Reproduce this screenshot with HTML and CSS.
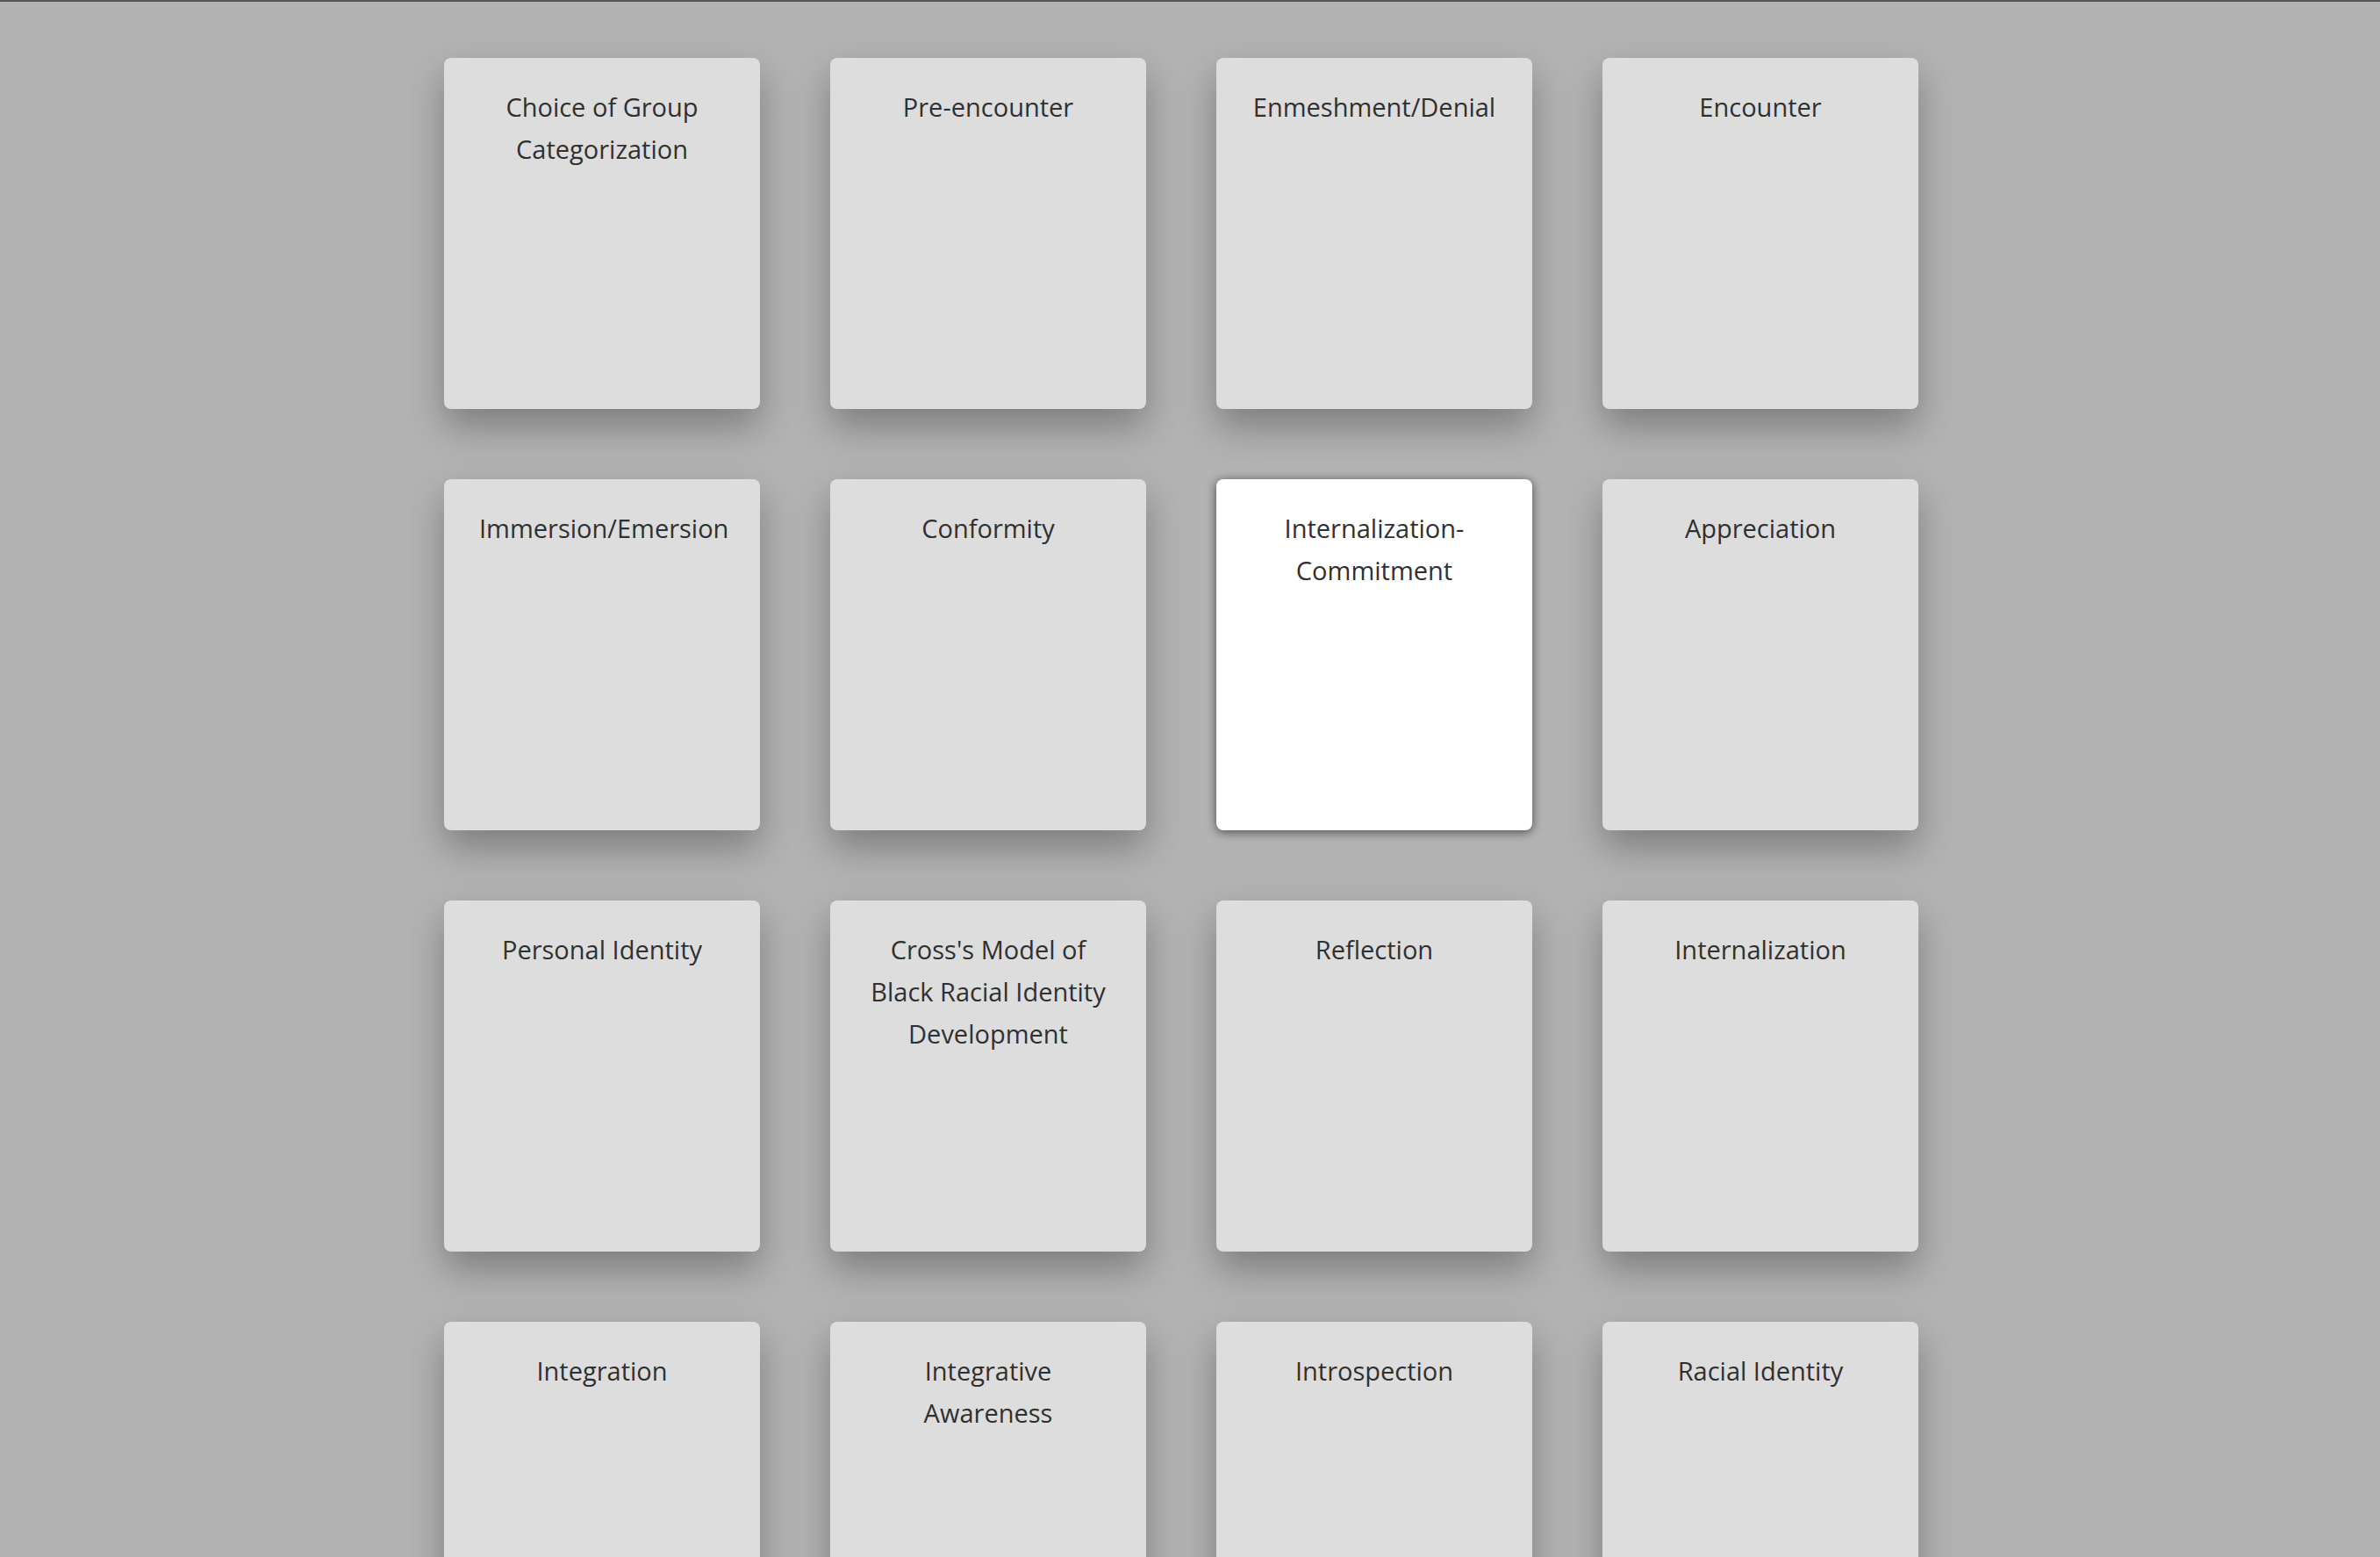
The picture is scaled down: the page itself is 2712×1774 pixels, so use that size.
FILE: index.html
```html
<!DOCTYPE html>
<html lang="en">
<head>
<meta charset="utf-8">
<title>Racial Identity Cards</title>
<link rel="stylesheet" href="styles.css">
</head>
<body>
<div class="page">
  <div class="board">
    <div class="card"><div class="label">Choice of Group Categorization</div></div>
    <div class="card"><div class="label">Pre-encounter</div></div>
    <div class="card"><div class="label">Enmeshment/Denial</div></div>
    <div class="card"><div class="label">Encounter</div></div>
    <div class="card"><div class="label">Immersion/Emersion</div></div>
    <div class="card"><div class="label">Conformity</div></div>
    <div class="card card-active"><div class="label">Internalization-Commitment</div></div>
    <div class="card"><div class="label">Appreciation</div></div>
    <div class="card"><div class="label">Personal Identity</div></div>
    <div class="card"><div class="label">Cross's Model of Black Racial Identity Development</div></div>
    <div class="card"><div class="label">Reflection</div></div>
    <div class="card"><div class="label">Internalization</div></div>
    <div class="card"><div class="label">Integration</div></div>
    <div class="card"><div class="label">Integrative Awareness</div></div>
    <div class="card"><div class="label">Introspection</div></div>
    <div class="card"><div class="label">Racial Identity</div></div>
  </div>
</div>
</body>
</html>
```

FILE: styles.css
```css
html, body {
  margin: 0;
  padding: 0;
  background: #b3b3b3;
}

body {
  border-top: 2px solid #565656;
  font-family: "Open Sans", "Noto Sans", Arial, sans-serif;
  color: #303030;
}

.page {
  padding: 64px 20px 80px 0;
}

.board {
  width: 1680px;
  margin: 0 auto;
  display: grid;
  grid-template-columns: repeat(4, 360px);
  grid-auto-rows: 400px;
  gap: 80px;
}

.card {
  background: #dddddd;
  border-radius: 8px;
  box-shadow: 0 20px 44px rgba(0, 0, 0, 0.3);
  padding: 32px 40px 0;
  box-sizing: border-box;
}

.card-active {
  background: #ffffff;
  box-shadow: 0 2px 12px rgba(0, 0, 0, 0.6);
}

.label {
  font-size: 29px;
  line-height: 48px;
  text-align: center;
}
```
